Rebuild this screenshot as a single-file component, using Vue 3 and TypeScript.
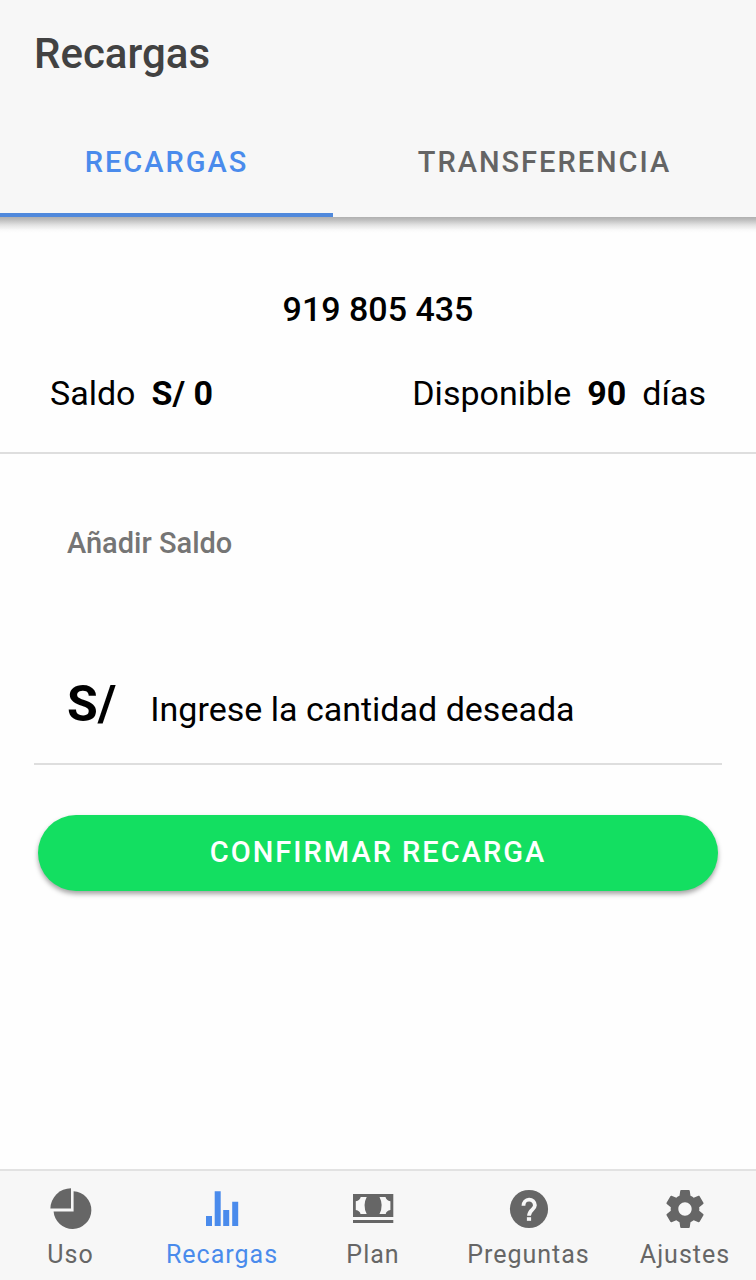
<script setup lang="ts">
import { ref } from 'vue'

type Icon = 'pie' | 'stats' | 'cash' | 'help' | 'settings'

const segments: string[] = ['Recargas', 'Transferencia']
const activeSegment = ref<string>('Recargas')

const tabs: { label: string; icon: Icon }[] = [
  { label: 'Uso', icon: 'pie' },
  { label: 'Recargas', icon: 'stats' },
  { label: 'Plan', icon: 'cash' },
  { label: 'Preguntas', icon: 'help' },
  { label: 'Ajustes', icon: 'settings' },
]
const activeTab = ref<string>('Recargas')
const amount = ref<string>('')
</script>

<template>
  <div class="page">
    <header class="header">
      <h1 class="title">Recargas</h1>
      <div class="segments">
        <button
          v-for="s in segments"
          :key="s"
          type="button"
          class="segment"
          :class="{ active: s === activeSegment }"
          @click="activeSegment = s"
        >{{ s }}</button>
      </div>
    </header>

    <main class="content">
      <section class="account">
        <p class="phone">919 805 435</p>
        <div class="balance">
          <p class="pair"><span>Saldo</span><strong>S/ 0</strong></p>
          <p class="pair"><span>Disponible</span><strong>90</strong><span>días</span></p>
        </div>
      </section>

      <form class="form" @submit.prevent>
        <h2 class="subtitle">Añadir Saldo</h2>
        <div class="field">
          <label class="currency" for="amount">S/</label>
          <input id="amount" v-model="amount" class="amount" type="text" inputmode="decimal" placeholder="Ingrese la cantidad deseada">
        </div>
        <button type="submit" class="confirm">Confirmar recarga</button>
      </form>
    </main>

    <nav class="tabbar">
      <a
        v-for="t in tabs"
        :key="t.label"
        href="#"
        class="tab"
        :class="{ active: t.label === activeTab }"
        @click.prevent="activeTab = t.label"
      >
        <svg v-if="t.icon === 'pie'" class="icon" viewBox="0 0 42 42" aria-hidden="true">
          <path d="M21 0.3A20.6 20.6 0 0 0 0.4 20.6H21Z" />
          <path d="M23.6 3.2A18.9 18.9 0 1 1 3.6 23.4H23.6Z" />
        </svg>
        <svg v-else-if="t.icon === 'stats'" class="icon" viewBox="0 0 42 42" aria-hidden="true">
          <path d="M5 28h6v10H5zM13.7 3.3h6V38h-6zM22.2 22h6v16h-6zM31.2 13.7h6V38h-6z" />
        </svg>
        <svg v-else-if="t.icon === 'cash'" class="icon" viewBox="0 0 42 42" aria-hidden="true">
          <path d="M1 6h40.3v23H1zM1 32h40.3v3H1z" />
          <path
            class="cutout"
            d="M8.7 9H14.7Q10.3 17.4 14.7 26H8.5Q8 22.9 3.8 22V13.3Q8 12.5 8.7 9ZM33.5 9H27.5Q31.9 17.4 27.5 26H33.7Q34.2 22.9 38.4 22V13.3Q34.2 12.5 33.5 9Z"
          />
        </svg>
        <svg v-else-if="t.icon === 'help'" class="icon" viewBox="1 1 22 22" aria-hidden="true">
          <circle cx="12" cy="12" r="10" />
          <path class="mark" d="M9.1 10.3A2.95 3.1 0 0 1 15.1 10.1C15.1 12.3 12 12.5 12 15.6" />
          <path class="cutout" d="M10.9 16.3h2.2v1.9h-2.2z" />
        </svg>
        <svg v-else class="icon" viewBox="1 1 22 22" aria-hidden="true">
          <path
            d="M19.43 12.98c.04-.32.07-.64.07-.98s-.03-.66-.07-.98l2.11-1.65c.19-.15.24-.42.12-.64l-2-3.46c-.12-.22-.39-.3-.61-.22l-2.49 1c-.52-.4-1.08-.73-1.69-.98l-.38-2.65C14.46 2.18 14.25 2 14 2h-4c-.25 0-.46.18-.49.42l-.38 2.65c-.61.25-1.17.59-1.69.98l-2.49-1c-.23-.09-.49 0-.61.22l-2 3.46c-.13.22-.07.49.12.64l2.11 1.65c-.04.32-.07.65-.07.98s.03.66.07.98l-2.11 1.65c-.19.15-.24.42-.12.64l2 3.46c.12.22.39.3.61.22l2.49-1c.52.4 1.08.73 1.69.98l.38 2.65c.03.24.24.42.49.42h4c.25 0 .46-.18.49-.42l.38-2.65c.61-.25 1.17-.59 1.69-.98l2.49 1c.23.09.49 0 .61-.22l2-3.46c.12-.22.07-.49-.12-.64l-2.11-1.65zM12 15.5c-1.93 0-3.5-1.57-3.5-3.5s1.57-3.5 3.5-3.5 3.5 1.57 3.5 3.5-1.57 3.5-3.5 3.5z"
          />
        </svg>
        <span>{{ t.label }}</span>
      </a>
    </nav>
  </div>
</template>

<style>
body {
  margin: 0;
  background: #fefefe;
}
</style>

<style scoped>
.page {
  display: flex;
  flex-direction: column;
  min-height: 100vh;
  font-family: Roboto, "Liberation Sans", sans-serif;
  color: #000;
}

h1,
h2,
p {
  margin: 0;
}

button,
input {
  font-family: inherit;
  border: 0;
  background: none;
  padding: 0;
}

.header {
  position: relative;
  background: #f7f7f7;
}

.header::after {
  content: "";
  position: absolute;
  top: 100%;
  left: 0;
  right: 0;
  height: 16px;
  background: linear-gradient(#b0b0b0, #bcbcbc 16%, #e2e2e2 50%, #f9f9f9 80%, #fefefe);
  pointer-events: none;
}

.title {
  padding: 0 34px;
  font-size: 42px;
  line-height: 108px;
  font-weight: 500;
  color: #424242;
}

.segments {
  display: grid;
  grid-template-columns: 333fr 423fr;
}

.segment {
  height: 109px;
  padding-top: 2px;
  border-bottom: 4px solid transparent;
  font-size: 29px;
  font-weight: 500;
  letter-spacing: 2px;
  text-transform: uppercase;
  color: #646464;
}

.segment.active {
  border-color: #5089dc;
  color: #4a8bec;
}

.content {
  flex: 1;
}

.account {
  padding: 72px 50px 39px;
  border-bottom: 2px solid #dedede;
  font-size: 34px;
  line-height: 40px;
}

.phone {
  text-align: center;
  font-weight: 500;
}

.balance {
  display: flex;
  justify-content: space-between;
  margin-top: 44px;
}

.pair {
  display: flex;
  gap: 16px;
}

.form {
  padding: 69px 34px 0;
}

.subtitle {
  padding: 0 33px;
  font-size: 29px;
  line-height: 40px;
  font-weight: 500;
  color: #757575;
}

.field {
  display: flex;
  align-items: baseline;
  gap: 34px;
  margin-top: 109px;
  padding: 0 33px 27px;
  border-bottom: 2px solid #dedede;
}

.currency {
  font-size: 50px;
  line-height: 64px;
  font-weight: 700;
}

.amount {
  flex: 1;
  min-width: 0;
  font-size: 34px;
  line-height: 40px;
  color: #000;
  outline: none;
}

.amount::placeholder {
  color: #000;
  opacity: 1;
}

.confirm {
  display: block;
  width: calc(100% - 8px);
  height: 76px;
  margin: 50px 4px 0;
  padding-bottom: 2px;
  border-radius: 38px;
  background: #13df61;
  box-shadow: 0 3px 5px rgba(0, 0, 0, 0.36);
  font-size: 29px;
  font-weight: 500;
  letter-spacing: 2px;
  text-transform: uppercase;
  color: #fff;
}

.tabbar {
  display: grid;
  grid-template-columns: 141fr 162fr 140fr 171fr 142fr;
  border-top: 2px solid #e2e2e2;
  background: #f7f7f7;
}

.tab {
  display: flex;
  flex-direction: column;
  align-items: center;
  gap: 9px;
  padding: 17px 0 9px;
  font-size: 25px;
  line-height: 32px;
  letter-spacing: 1px;
  text-decoration: none;
  color: #666;
}

.tab.active {
  color: #4a8bec;
}

.icon {
  width: 42px;
  height: 42px;
  fill: currentColor;
}

.cutout {
  fill: #f7f7f7;
}

.mark {
  fill: none;
  stroke: #f7f7f7;
  stroke-width: 2;
}
</style>
